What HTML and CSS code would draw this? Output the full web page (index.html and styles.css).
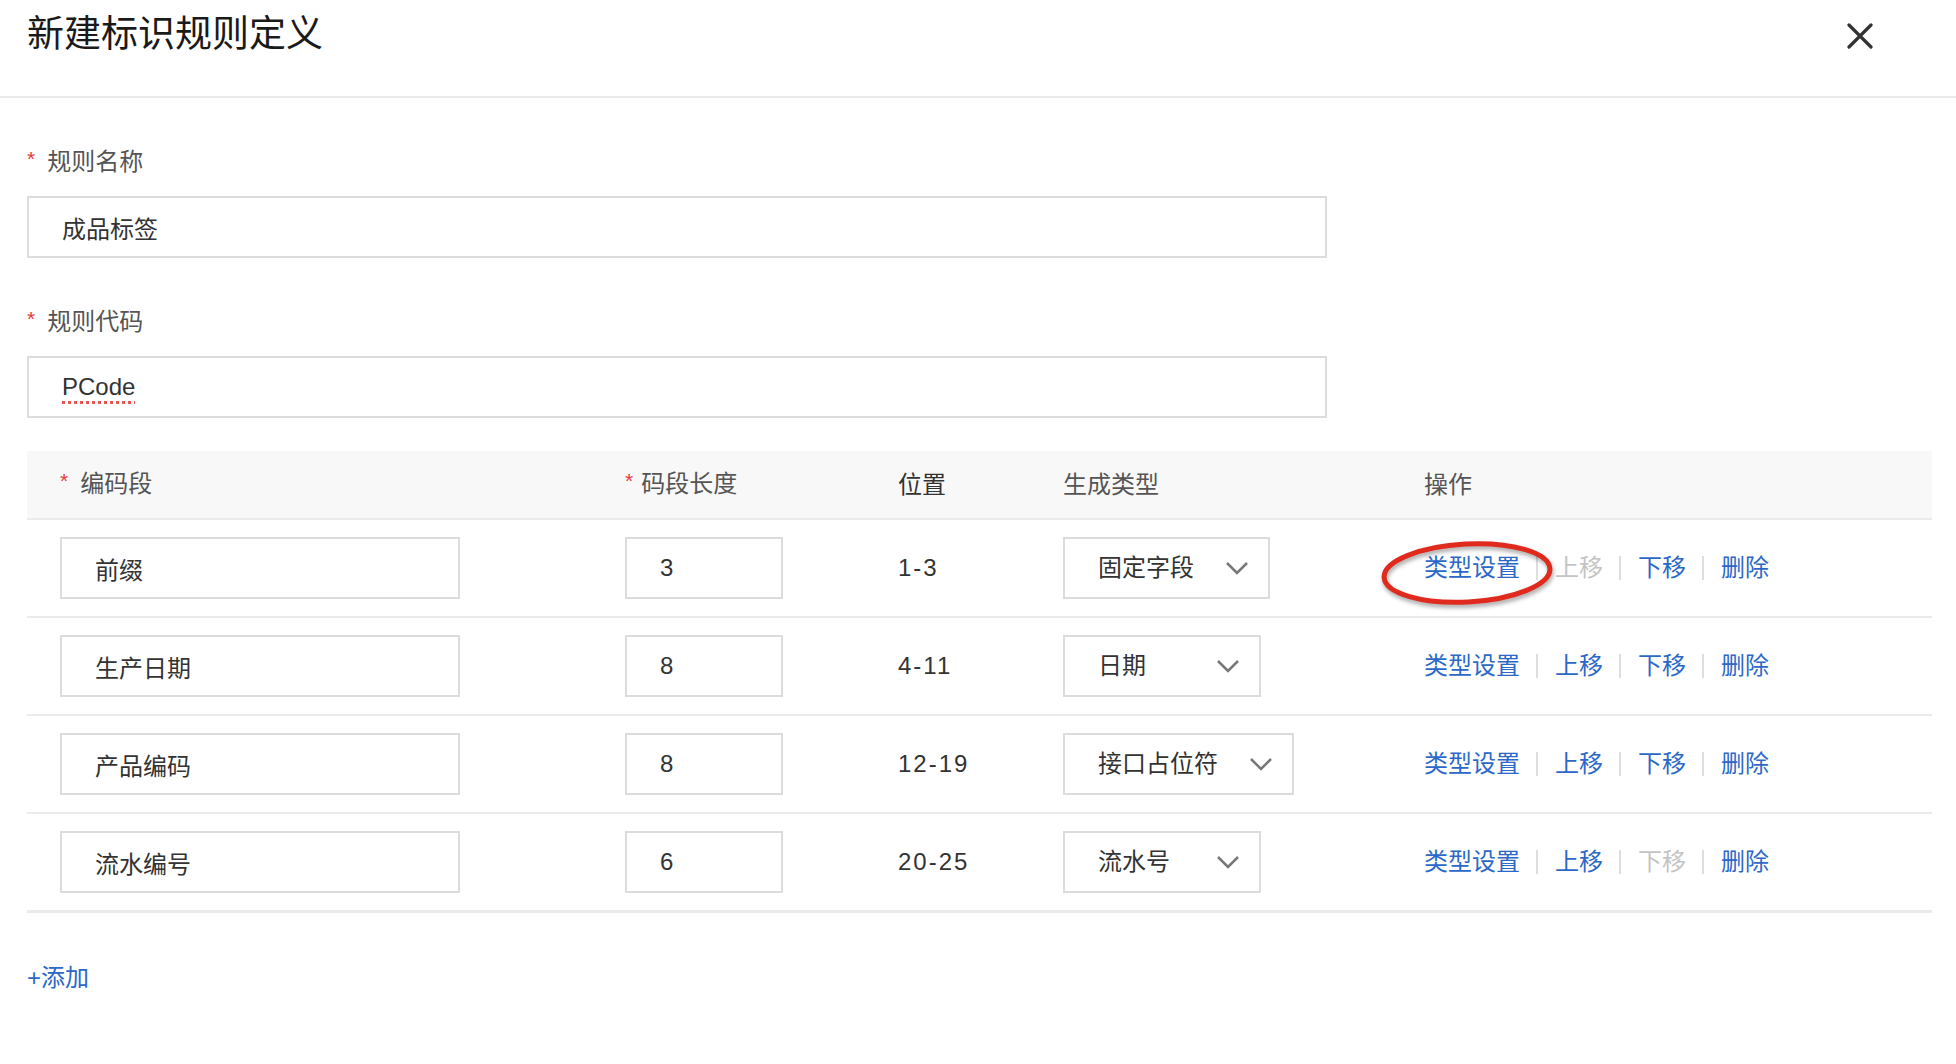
FILE: index.html
```html
<!DOCTYPE html>
<html lang="zh-CN">
<head>
    <meta charset="UTF-8">
    <meta name="viewport" content="width=device-width, initial-scale=1.0">
    <title>新建标识规则定义</title>
    <link rel="stylesheet" href="styles.css">
</head>
<body>
    <div class="dialog">
        <div class="dialog-header">
            <h1>新建标识规则定义</h1>
            <button class="close-btn" type="button" aria-label="关闭">
                <svg width="26" height="26" viewBox="0 0 26 26"><path d="M2 2 L24 24 M24 2 L2 24" stroke="#333" stroke-width="3.2" stroke-linecap="round"/></svg>
            </button>
        </div>

        <div class="dialog-body">
            <!-- 基本信息 -->
            <div class="field">
                <label class="field-label"><span class="req">*</span>规则名称</label>
                <input class="text-input" type="text" value="成品标签">
            </div>
            <div class="field">
                <label class="field-label"><span class="req">*</span>规则代码</label>
                <div class="text-input" contenteditable="true"><span class="misspelled">PCode</span></div>
            </div>

            <!-- 编码段表格 -->
            <div class="rule-table">
                <div class="table-row table-head">
                    <div class="cell cell-name"><span class="req">*</span>编码段</div>
                    <div class="cell cell-len"><span class="req">*</span>码段长度</div>
                    <div class="cell cell-pos">位置</div>
                    <div class="cell cell-type">生成类型</div>
                    <div class="cell cell-ops">操作</div>
                </div>

                <div class="table-row">
                    <div class="cell cell-name"><input class="text-input name-input" type="text" value="前缀"></div>
                    <div class="cell cell-len"><input class="text-input len-input" type="text" value="3"></div>
                    <div class="cell cell-pos">1-3</div>
                    <div class="cell cell-type">
                        <div class="select"><span>固定字段</span><svg class="arrow" width="24" height="14" viewBox="0 0 24 14"><path d="M2 2 L12 12 L22 2" fill="none" stroke="#777" stroke-width="2.5"/></svg></div>
                    </div>
                    <div class="cell cell-ops">
                        <a href="#" class="op marked">类型设置
                            <svg class="mark" width="176" height="70" viewBox="0 0 176 70"><ellipse cx="88" cy="34" rx="83" ry="29" fill="none" stroke="#e12a1e" stroke-width="5" transform="rotate(-3 88 34)"/></svg>
                        </a>
                        <span class="sep"></span><a href="#" class="op disabled">上移</a>
                        <span class="sep"></span><a href="#" class="op">下移</a>
                        <span class="sep"></span><a href="#" class="op">删除</a>
                    </div>
                </div>

                <div class="table-row">
                    <div class="cell cell-name"><input class="text-input name-input" type="text" value="生产日期"></div>
                    <div class="cell cell-len"><input class="text-input len-input" type="text" value="8"></div>
                    <div class="cell cell-pos">4-11</div>
                    <div class="cell cell-type">
                        <div class="select"><span>日期</span><svg class="arrow" width="24" height="14" viewBox="0 0 24 14"><path d="M2 2 L12 12 L22 2" fill="none" stroke="#777" stroke-width="2.5"/></svg></div>
                    </div>
                    <div class="cell cell-ops">
                        <a href="#" class="op">类型设置</a>
                        <span class="sep"></span><a href="#" class="op">上移</a>
                        <span class="sep"></span><a href="#" class="op">下移</a>
                        <span class="sep"></span><a href="#" class="op">删除</a>
                    </div>
                </div>

                <div class="table-row">
                    <div class="cell cell-name"><input class="text-input name-input" type="text" value="产品编码"></div>
                    <div class="cell cell-len"><input class="text-input len-input" type="text" value="8"></div>
                    <div class="cell cell-pos">12-19</div>
                    <div class="cell cell-type">
                        <div class="select"><span>接口占位符</span><svg class="arrow" width="24" height="14" viewBox="0 0 24 14"><path d="M2 2 L12 12 L22 2" fill="none" stroke="#777" stroke-width="2.5"/></svg></div>
                    </div>
                    <div class="cell cell-ops">
                        <a href="#" class="op">类型设置</a>
                        <span class="sep"></span><a href="#" class="op">上移</a>
                        <span class="sep"></span><a href="#" class="op">下移</a>
                        <span class="sep"></span><a href="#" class="op">删除</a>
                    </div>
                </div>

                <div class="table-row">
                    <div class="cell cell-name"><input class="text-input name-input" type="text" value="流水编号"></div>
                    <div class="cell cell-len"><input class="text-input len-input" type="text" value="6"></div>
                    <div class="cell cell-pos">20-25</div>
                    <div class="cell cell-type">
                        <div class="select"><span>流水号</span><svg class="arrow" width="24" height="14" viewBox="0 0 24 14"><path d="M2 2 L12 12 L22 2" fill="none" stroke="#777" stroke-width="2.5"/></svg></div>
                    </div>
                    <div class="cell cell-ops">
                        <a href="#" class="op">类型设置</a>
                        <span class="sep"></span><a href="#" class="op">上移</a>
                        <span class="sep"></span><a href="#" class="op disabled">下移</a>
                        <span class="sep"></span><a href="#" class="op">删除</a>
                    </div>
                </div>
            </div>

            <a href="#" class="add-link">+添加</a>
        </div>
    </div>
</body>
</html>
```

FILE: styles.css
```css
:root {
    --text: #333;
    --label: #555;
    --border: #dcdcdc;
    --line: #ebebeb;
    --blue: #2b68c8;
    --muted: #c4c4c4;
    --red: #e4393c;
}

* {
    margin: 0;
    padding: 0;
    box-sizing: border-box;
    font-family: "Liberation Sans", "Noto Sans CJK SC", sans-serif;
}

body {
    background-color: #fff;
    color: var(--text);
}

.dialog {
    width: 1956px;
    min-height: 1064px;
}

.dialog-header {
    height: 98px;
    display: flex;
    justify-content: space-between;
    align-items: flex-start;
    padding: 11px 83px 0 27px;
    border-bottom: 2px solid var(--line);
}

.dialog-header h1 {
    font-size: 37px;
    line-height: 48px;
    font-weight: 400;
    color: #1a1a1a;
}

.close-btn {
    background: none;
    border: none;
    margin-top: 12px;
    width: 26px;
    height: 26px;
    cursor: pointer;
}

.close-btn svg {
    display: block;
}

.dialog-body {
    padding: 48px 24px 0 27px;
}

.field + .field {
    margin-top: 48px;
}

.field-label {
    display: block;
    font-size: 24px;
    line-height: 32px;
    color: var(--label);
    margin-bottom: 17px;
}

.req {
    color: var(--red);
    font-size: 21px;
    margin-right: 12px;
    position: relative;
    top: -4px;
}

.text-input {
    display: flex;
    align-items: center;
    width: 1300px;
    height: 62px;
    border: 2px solid var(--border);
    padding: 0 0 0 33px;
    font-size: 24px;
    color: var(--text);
    background: #fff;
    outline: none;
}

.misspelled {
    text-decoration: underline dotted #e8574f;
    text-decoration-thickness: 3px;
    text-underline-offset: 6px;
}

.rule-table {
    margin-top: 33px;
    border-bottom: 3px solid var(--line);
}

.table-row {
    display: grid;
    grid-template-columns: 598px 273px 165px 361px 1fr;
    align-items: center;
    padding: 17px 0;
    border-bottom: 2px solid var(--line);
    font-size: 24px;
}

.table-row:last-child {
    border-bottom: none;
}

.table-head {
    height: 69px;
    padding: 0;
    background-color: #f8f8f8;
    color: var(--label);
}

.cell {
    line-height: 32px;
}

.cell-name {
    padding-left: 33px;
}

.cell-len .req {
    margin-right: 8px;
}

.name-input {
    width: 400px;
}

.len-input {
    width: 158px;
    letter-spacing: 1px;
}

.cell-pos {
    color: var(--text);
    letter-spacing: 2px;
}

.table-head .cell-pos {
    letter-spacing: 0;
}

.select {
    display: inline-flex;
    justify-content: space-between;
    align-items: center;
    gap: 31px;
    min-width: 198px;
    height: 62px;
    padding: 0 19px 0 33px;
    border: 2px solid var(--border);
    color: var(--text);
    background: #fff;
}

.select .arrow {
    display: block;
    flex-shrink: 0;
}

.cell-ops {
    display: flex;
    align-items: center;
}

.op {
    color: var(--blue);
    text-decoration: none;
    white-space: nowrap;
}

.op.disabled {
    color: var(--muted);
}

.sep {
    display: inline-block;
    width: 2px;
    height: 24px;
    background-color: #dedede;
    margin: 0 17px 0 16px;
}

.marked {
    position: relative;
}

.mark {
    position: absolute;
    left: -45px;
    top: -13px;
    pointer-events: none;
    filter: drop-shadow(1px 3px 2px rgba(0, 0, 0, 0.35));
}

.add-link {
    display: inline-block;
    margin-top: 49px;
    font-size: 24px;
    line-height: 32px;
    color: var(--blue);
    text-decoration: none;
}
```
